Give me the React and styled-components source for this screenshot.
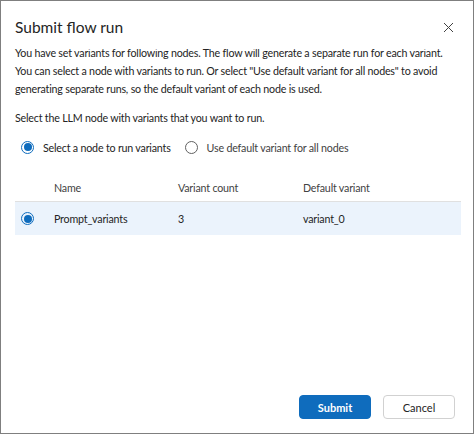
import React from "react";
import styled, { createGlobalStyle } from "styled-components";

const Global = createGlobalStyle`
  html, body {
    margin: 0;
    padding: 0;
    background: #ffffff;
  }
  * {
    box-sizing: border-box;
  }
`;

const FONT = `Lato, "Noto Sans", sans-serif`;

const Dialog = styled.div`
  width: 474px;
  height: 434px;
  border: 1px solid #7f7f7f;
  background: #ffffff;
  display: flex;
  flex-direction: column;
  font-family: ${FONT};
  font-size: 10.7px;
  letter-spacing: -0.2px;
  color: #242424;
`;

const Header = styled.div`
  height: 48px;
  flex: none;
  display: flex;
  align-items: center;
  justify-content: space-between;
  padding: 4px 18px 0 14px;
`;

const Title = styled.div`
  font-size: 15.5px;
  letter-spacing: 0;
  font-weight: 400;
`;

const Close = styled.button`
  border: none;
  background: none;
  padding: 0;
  width: 14px;
  height: 14px;
  display: flex;
  align-items: center;
  justify-content: center;
  color: #424242;
`;

const Body = styled.div`
  flex: 1;
  overflow: hidden;
  padding: 0 14px;
`;

const Scroller = styled.div`
  margin-top: -5px;
`;

const Intro = styled.p`
  margin: 0;
  line-height: 18px;
`;

const Prompt = styled.p`
  margin: 11px 0 0;
  line-height: 18px;
`;

const RadioGroup = styled.div`
  display: flex;
  align-items: center;
  gap: 14px;
  margin-top: 11px;
  padding-left: 6px;
  height: 18px;
`;

const Option = styled.label`
  display: flex;
  align-items: center;
  gap: 9px;
  color: ${(p) => (p.checked ? "#242424" : "#424242")};
`;

const Circle = styled.span`
  width: 13px;
  height: 13px;
  border-radius: 50%;
  border: 1px solid ${(p) => (p.checked ? "#0f6cbd" : "#616161")};
  display: flex;
  align-items: center;
  justify-content: center;
  flex: none;

  &::after {
    content: "";
    width: 8px;
    height: 8px;
    border-radius: 50%;
    background: ${(p) => (p.checked ? "#0f6cbd" : "transparent")};
  }
`;

const Table = styled.div`
  margin-top: 17px;
  width: 446px;
`;

const Row = styled.div`
  display: grid;
  grid-template-columns: 39px 124px 125px 1fr;
  align-items: center;
  height: ${(p) => (p.head ? "29px" : "33px")};
  background: ${(p) => (p.selected ? "#ebf3fc" : "transparent")};
  border-bottom: ${(p) => (p.head ? "1px solid #e0e0e0" : "none")};
  color: ${(p) => (p.head ? "#424242" : "#242424")};
`;

const Cell = styled.div`
  display: flex;
  align-items: center;
  padding-left: ${(p) => (p.radio ? "6px" : "0")};
`;

const Footer = styled.div`
  flex: none;
  display: flex;
  justify-content: flex-end;
  gap: 12px;
  padding: 0 18px 14px 0;
`;

const Button = styled.button`
  width: 72px;
  height: 24px;
  border-radius: 4px;
  font-family: ${FONT};
  font-size: 11px;
  font-weight: ${(p) => (p.primary ? 700 : 400)};
  border: 1px solid ${(p) => (p.primary ? "#0f6cbd" : "#d1d1d1")};
  background: ${(p) => (p.primary ? "#0f6cbd" : "#ffffff")};
  color: ${(p) => (p.primary ? "#ffffff" : "#242424")};
  padding: 0;
`;

const nodes = [{ name: "Prompt_variants", count: 3, def: "variant_0" }];

export default function App() {
  return (
    <>
      <Global />
      <Dialog>
        <Header>
          <Title>Submit flow run</Title>
          <Close aria-label="Close">
            <svg width="11" height="11" viewBox="0 0 11 11">
              <path
                d="M1 1 L10 10 M10 1 L1 10"
                stroke="currentColor"
                strokeWidth="1"
                fill="none"
              />
            </svg>
          </Close>
        </Header>
        <Body>
          <Scroller>
            <Intro>
              You have set variants for following nodes. The flow will generate a
              separate run for each variant. You can select a node with variants to
              run. Or select "Use default variant for all nodes" to avoid generating
              separate runs, so the default variant of each node is used.
            </Intro>
            <Prompt>Select the LLM node with variants that you want to run.</Prompt>
            <RadioGroup>
              <Option checked>
                <Circle checked />
                Select a node to run variants
              </Option>
              <Option>
                <Circle />
                Use default variant for all nodes
              </Option>
            </RadioGroup>
            <Table>
              <Row head>
                <Cell />
                <Cell>Name</Cell>
                <Cell>Variant count</Cell>
                <Cell>Default variant</Cell>
              </Row>
              {nodes.map((n) => (
                <Row key={n.name} selected>
                  <Cell radio>
                    <Circle checked />
                  </Cell>
                  <Cell>{n.name}</Cell>
                  <Cell>{n.count}</Cell>
                  <Cell>{n.def}</Cell>
                </Row>
              ))}
            </Table>
          </Scroller>
        </Body>
        <Footer>
          <Button primary>Submit</Button>
          <Button>Cancel</Button>
        </Footer>
      </Dialog>
    </>
  );
}
